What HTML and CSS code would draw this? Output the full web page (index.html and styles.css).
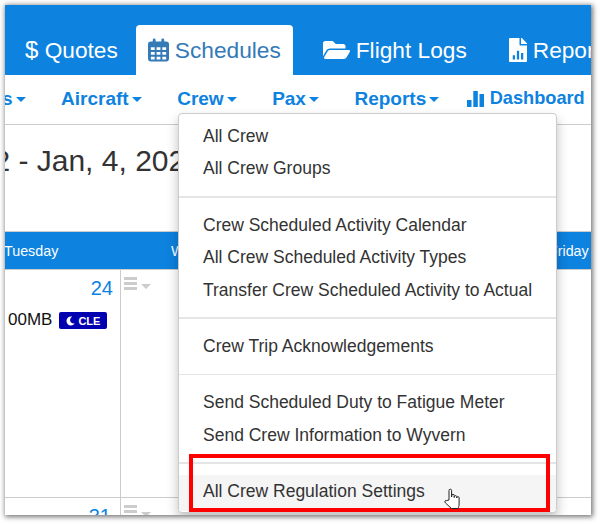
FILE: index.html
```html
<!DOCTYPE html>
<html lang="en">
<head>
    <meta charset="UTF-8">
    <title>Crew menu</title>
    <link rel="stylesheet" href="styles.css">
</head>
<body>
    <div class="shot">
        <div class="topbar">
            <a class="tab quotes"><span class="dollar">$</span> Quotes</a>
            <a class="tab active">
                <svg class="ico-cal" viewBox="0 0 22 24">
                    <path fill="#337ab7" d="M3 3h2V1.500a1.500 1.500 0 0 1 3 0V3h6V1.500a1.500 1.500 0 0 1 3 0V3h2a3 3 0 0 1 3 3v15a3 3 0 0 1-3 3H3a3 3 0 0 1-3-3V6a3 3 0 0 1 3-3z"/>
                    <path fill="#fff" d="M3 9h4v3H3zM9 9h4v3H9zM15 9h4v3h-4zM3 14h4v3H3zM9 14h4v3H9zM15 14h4v3h-4zM3 19h4v3H3zM9 19h4v3H9zM15 19h4v3h-4z"/>
                </svg>
                Schedules
            </a>
            <a class="tab logs">
                <svg class="ico-folder" viewBox="0 0 576 512"><path fill="#fff" d="M572.694 292.093L500.27 416.248A63.997 63.997 0 0 1 444.989 448H45.025c-18.523 0-30.064-20.093-20.731-36.093l72.424-124.155A64 64 0 0 1 152 256h399.964c18.523 0 30.064 20.093 20.73 36.093zM152 224h328v-48c0-26.51-21.49-48-48-48H272l-64-64H48C21.49 64 0 85.49 0 112v278.046l69.077-118.418C86.214 242.25 117.989 224 152 224z"/></svg>
                Flight Logs
            </a>
            <a class="tab reports">
                <svg class="ico-file" viewBox="0 0 384 512">
                    <path fill="#fff" d="M224 136V0H24C10.700 0 0 10.700 0 24v464c0 13.300 10.700 24 24 24h336c13.300 0 24-10.700 24-24V160H248c-13.200 0-24-10.800-24-24zm160-14.100v6.100H256V0h6.100c6.400 0 12.500 2.500 17 7l97.900 98c4.500 4.500 7 10.600 7 16.900z"/>
                    <path fill="#0d82df" d="M80 368h48v88H80zM168 272h48v184h-48zM256 320h48v136h-48z"/>
                </svg>
                Reports
            </a>
        </div>

        <div class="subnav">
            <a class="sub-first">s<i class="caret"></i></a>
            <a class="sub-item">Aircraft<i class="caret"></i></a>
            <a class="sub-item">Crew<i class="caret"></i></a>
            <a class="sub-item">Pax<i class="caret"></i></a>
            <a class="sub-item">Reports<i class="caret"></i></a>
            <a class="sub-dash">
                <svg class="ico-bars" viewBox="0 0 17 16"><path fill="#0d82df" d="M0 9h4.500v7H0zM6.300 0h4.500v16H6.300zM12.500 3H17v13h-4.500z"/></svg>
                Dashboard
            </a>
        </div>

        <div class="title">2 - Jan, 4, 2022</div>

        <div class="week-head">
            <span>Tuesday</span>
            <span>W</span>
            <span></span>
            <span>Friday</span>
        </div>

        <div class="week">
            <div class="day first">
                <div class="num">24</div>
                <div class="trip">00MB
                    <span class="badge">
                        <svg class="ico-moon" viewBox="0 0 512 512"><path fill="#fff" d="M283.211 512c78.962 0 151.079-35.925 198.857-94.792 7.068-8.708-.639-21.430-11.562-19.350-124.203 23.654-238.262-71.576-238.262-196.954 0-72.222 38.662-138.635 101.498-174.394 9.686-5.512 7.250-20.197-3.756-22.230A258.156 258.156 0 0 0 283.211 0c-141.309 0-256 114.511-256 256 0 141.309 114.511 256 256 256z"/></svg>
                        CLE
                    </span>
                </div>
            </div>
            <div class="day"><div class="day-menu"><i class="burger"></i><i class="caret grey"></i></div></div>
        </div>

        <div class="week next">
            <div class="day first"><div class="num">31</div></div>
            <div class="day"><div class="day-menu"><i class="burger"></i><i class="caret grey"></i></div></div>
            <div class="day"><div class="day-menu"><i class="burger"></i></div></div>
            <div class="day"><div class="day-menu"><i class="burger"></i></div></div>
        </div>

        <ul class="menu">
            <li>All Crew</li>
            <li>All Crew Groups</li>
            <li class="divider"></li>
            <li>Crew Scheduled Activity Calendar</li>
            <li>All Crew Scheduled Activity Types</li>
            <li>Transfer Crew Scheduled Activity to Actual</li>
            <li class="divider"></li>
            <li>Crew Trip Acknowledgements</li>
            <li class="divider"></li>
            <li>Send Scheduled Duty to Fatigue Meter</li>
            <li>Send Crew Information to Wyvern</li>
            <li class="divider"></li>
            <li class="hover">All Crew Regulation Settings</li>
        </ul>

        <div class="redbox"></div>
        <svg class="hand" viewBox="0 0 18 23">
            <path fill="#fff" stroke="#222" stroke-width="1" stroke-linejoin="round" d="M5 12V2.500a1.300 1.300 0 0 1 2.600 0V9l.2-1.500a1.200 1.200 0 0 1 2.400 0V9.500l.2-1a1.200 1.200 0 0 1 2.300 0v1.500l.3-.7a1.100 1.100 0 0 1 2.100.3V16c0 2-.6 3-1 4.500H7.500L1.500 15c-1.400-1.500-.3-3 1.200-2.400z"/>
        </svg>
    </div>
</body>
</html>
```
FILE: styles.css
```css
html,
body {
    height: 524px;
}

body {
    margin: 0;
    overflow: hidden;
    background: #fff;
    font-family: "Liberation Sans", Arial, sans-serif;
}

.shot {
    position: relative;
    overflow: hidden;
    margin: 5px 0 0 5px;
    width: 586px;
    height: 510px;
    background: #fff;
    box-shadow: 1px 1px 5px 1px #777;
}

/* top tabs */
.topbar {
    display: flex;
    align-items: flex-end;
    height: 70px;
    background: #0d82df;
    white-space: nowrap;
}

.tab {
    display: flex;
    align-items: center;
    gap: 6px;
    height: 50px;
    flex: none;
    font-size: 22.700px;
    color: #fff;
}

.quotes {
    margin-left: 20px;
    gap: 0;
    white-space: pre;
}

.dollar {
    font-size: 24px;
}

.active {
    margin-left: 18px;
    padding: 0 12px;
    background: #fff;
    border-radius: 4px 4px 0 0;
    color: #337ab7;
}

.logs {
    margin-left: 30px;
}

.reports {
    margin-left: 42px;
}

.ico-cal {
    width: 21px;
    height: 24px;
}

.ico-folder {
    width: 27px;
    height: 24px;
}

.ico-file {
    width: 18px;
    height: 24px;
}

/* second row */
.subnav {
    display: flex;
    align-items: center;
    height: 47px;
    padding-bottom: 2px;
    border-bottom: 1px solid #ccc;
    font-size: 19px;
    font-weight: bold;
    color: #0d82df;
    white-space: nowrap;
}

.subnav a {
    display: flex;
    align-items: center;
    flex: none;
}

.sub-first {
    margin-left: -3px;
}

.sub-item {
    margin-left: 35.500px;
}

.sub-dash {
    margin-left: 27.500px;
    gap: 6px;
    font-size: 18.200px;
}

.ico-bars {
    width: 17px;
    height: 16px;
}

.caret {
    display: inline-block;
    margin: 2px 0 0 3px;
    border-top: 5px solid #0d82df;
    border-left: 5px solid transparent;
    border-right: 5px solid transparent;
}

.caret.grey {
    margin: 6px 0 0 4px;
    border-top-color: #ccc;
}

/* date title */
.title {
    height: 106px;
    margin-left: -11.600px;
    font-size: 30px;
    line-height: 71px;
    color: #333;
    white-space: nowrap;
}

/* calendar */
.week-head {
    display: grid;
    grid-template-columns: 167px 188px 190px 44px;
    height: 37px;
    margin-left: -1px;
    border-top: 1px solid #ccc;
    background: #0d82df;
    font-size: 14.300px;
    line-height: 38px;
    color: #fff;
}

.week {
    display: flex;
    height: 227px;
    border-top: 1px solid #ccc;
}

.week.next {
    height: 20px;
}

.day {
    flex: 1;
}

.day.first {
    flex: none;
    width: 115px;
    border-right: 1px solid #ccc;
    box-sizing: content-box;
}

.next .day:nth-child(2) {
    flex: none;
    width: 199px;
}

.next .day:nth-child(3) {
    flex: none;
    width: 177px;
}

.num {
    padding: 6px 7px 0 0;
    text-align: right;
    font-size: 20px;
    line-height: 24px;
    color: #0d82df;
}

.next .num {
    padding-right: 9px;
}

.trip {
    display: flex;
    align-items: center;
    gap: 7px;
    margin: 10px 0 0 3px;
    font-size: 17px;
    color: #111;
}

.badge {
    display: flex;
    align-items: center;
    gap: 3px;
    width: 48px;
    height: 17px;
    box-sizing: border-box;
    margin-top: 1px;
    padding-left: 7px;
    background: #0000b0;
    border-radius: 2px;
    font-size: 11px;
    font-weight: bold;
    color: #fff;
}

.ico-moon {
    width: 9px;
    height: 10px;
}

.day-menu {
    display: flex;
    align-items: center;
    padding: 7px 0 0 3px;
}

.burger {
    display: block;
    width: 13px;
    height: 3px;
    border-top: 3px solid #ccc;
    border-bottom: 3px solid #ccc;
    padding: 2px 0;
    background: #ccc;
    background-clip: content-box;
}

/* crew dropdown */
.menu {
    position: absolute;
    left: 173px;
    top: 108px;
    width: 377px;
    height: 392px;
    margin: 0;
    padding: 6px 0 0;
    box-sizing: content-box;
    list-style: none;
    background: #fff;
    border: 1px solid #ccc;
    border-radius: 4px;
    box-shadow: 0 6px 12px rgba(0,0,0,0.25);
    font-size: 17.500px;
    color: #333;
}

.menu li {
    height: 32.400px;
    line-height: 32.400px;
    padding-left: 24px;
    white-space: nowrap;
}

.menu li.divider {
    height: 1.500px;
    margin: 11.250px 0;
    padding: 0;
    background: #e5e5e5;
}

.menu li.hover {
    height: 36px;
    background: #f5f5f5;
}

/* annotation over the screenshot */
.redbox {
    position: absolute;
    left: 184px;
    top: 449px;
    width: 353px;
    height: 50px;
    border: 4px solid #f00;
}

.hand {
    position: absolute;
    left: 439px;
    top: 483px;
    width: 18px;
    height: 23px;
}
```
